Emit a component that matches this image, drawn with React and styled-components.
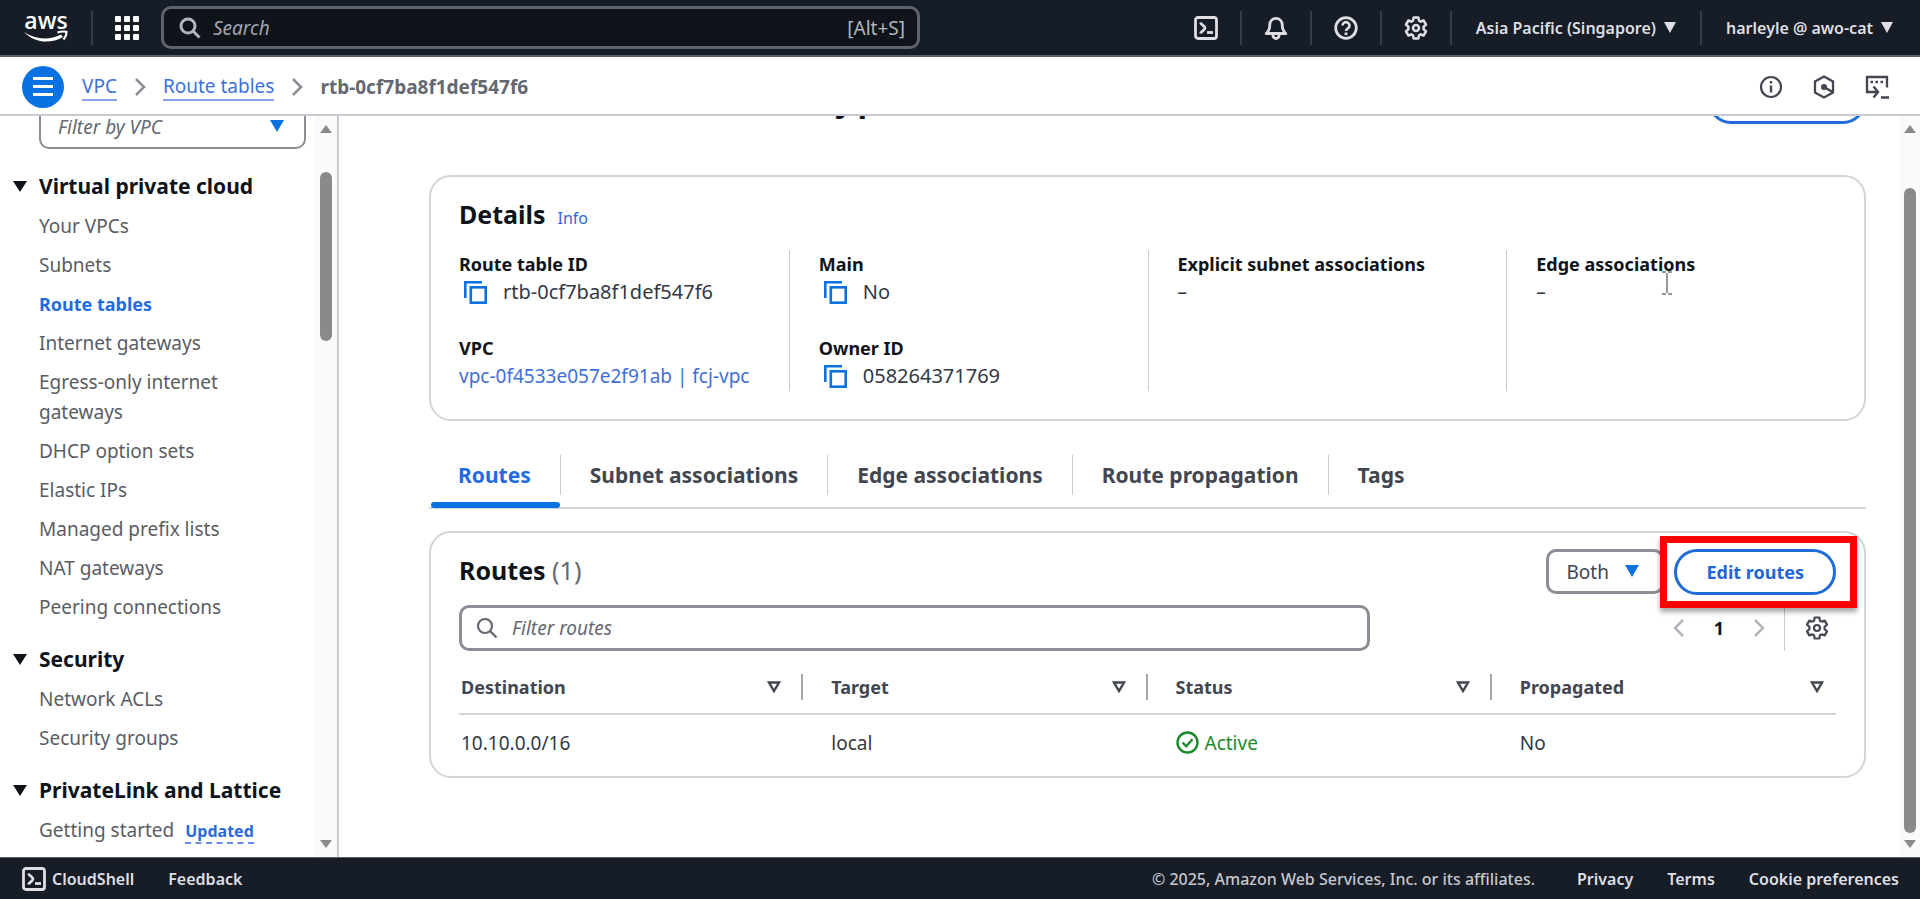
import React from 'react'
import styled, { createGlobalStyle } from 'styled-components'

const GlobalStyle = createGlobalStyle`
  * { box-sizing: border-box; }
  body {
    margin: 0;
    background: #fff;
    color: #0f141a;
    font-family: "Noto Sans", "Open Sans", sans-serif;
    font-size: 19px;
    line-height: 28px;
  }
  a { text-decoration: none; }
  button, input, select { font-family: inherit; font-size: inherit; }
`

const Page = styled.div`
  display: flex;
  flex-direction: column;
  height: 100vh;
`

/* ---- top bar ---- */
const TopBar = styled.header`
  display: flex;
  align-items: center;
  flex: none;
  height: 57px;
  padding: 0 3px 0 24px;
  background: #161d26;
  border-bottom: 2px solid #5b606b;
  color: #dedee3;
`
const LogoLink = styled.a`
  display: flex;
  margin-right: 22px;
`
const BarLine = styled.span`
  width: 2px;
  height: 34px;
  background: #363b45;
`
const BarButton = styled.button`
  display: flex;
  align-items: center;
  gap: 8px;
  padding: 0 ${props => props.$pad || 22}px;
  border: 0;
  background: none;
  color: #dedee3;
  font-size: 16px;
  font-weight: 600;
  white-space: nowrap;
`
const SearchBox = styled.label`
  display: flex;
  align-items: center;
  gap: 12px;
  width: 759px;
  height: 43px;
  margin-right: auto;
  padding: 0 12px 0 15px;
  border: 3px solid #5f636d;
  border-radius: 10px;
  background: #0f141a;
  color: #b4b4bb;
`
const SearchInput = styled.input`
  flex: 1;
  min-width: 0;
  padding: 0;
  border: 0;
  outline: 0;
  background: none;
  color: inherit;
  &::placeholder {
    color: #a4a4ad;
    font-style: italic;
    opacity: 1;
  }
`

/* ---- breadcrumbs ---- */
const CrumbBar = styled.div`
  display: flex;
  align-items: center;
  flex: none;
  height: 59px;
  padding: 2px 31px 0 22px;
  border-bottom: 2px solid #c9cad2;
`
const MenuButton = styled.button`
  display: flex;
  align-items: center;
  justify-content: center;
  width: 42px;
  height: 42px;
  margin-right: 18px;
  padding: 0;
  border: 0;
  border-radius: 50%;
  background: #0972e0;
`
const Crumbs = styled.nav`
  display: flex;
  align-items: center;
  gap: 17px;
  margin-right: auto;
`
const CrumbLink = styled.a`
  line-height: 26px;
  border-bottom: 2px solid #8ba0ec;
  color: #3f6fd8;
`
const CrumbCurrent = styled.span`
  color: #656871;
  font-weight: 700;
`
const ToolButtons = styled.div`
  display: flex;
  gap: 29px;
`
const IconButton = styled.button`
  display: flex;
  padding: 0;
  border: 0;
  background: none;
  color: #424650;
`

/* ---- body ---- */
const Body = styled.div`
  display: flex;
  flex: 1;
  min-height: 0;
`
const Sidebar = styled.aside`
  display: flex;
  flex: none;
  width: 339px;
  overflow: hidden;
  border-right: 2px solid #c9cad2;
`
const SideContent = styled.div`
  flex: 1;
  padding: 0 9px 0 13px;
`
const FilterSelect = styled.div`
  position: relative;
  margin: -12px 0 0 26px;
`
const Select = styled.select`
  appearance: none;
  display: block;
  width: 100%;
  height: 45px;
  padding: 0 40px 0 17px;
  border: ${props => props.$line || 2}px solid #8c8c94;
  border-radius: 10px;
  background: #fff;
  color: ${props => props.$hint ? '#656871' : '#424650'};
  font-style: ${props => props.$hint ? 'italic' : 'normal'};
`
const SelectCaret = styled.span`
  position: absolute;
  top: 16px;
  right: ${props => props.$right || 22}px;
  display: flex;
  color: #0972e0;
  pointer-events: none;
`
const SideSection = styled.section`
  margin-top: 22px;
`
const SideTitle = styled.h3`
  display: flex;
  align-items: center;
  gap: 12px;
  margin: 0 0 10px;
  font-size: 21px;
  font-weight: 700;
  line-height: 30px;
  white-space: nowrap;
`
const SideList = styled.ul`
  display: flex;
  flex-direction: column;
  gap: 9px;
  margin: 0;
  padding: 0 20px 0 26px;
  list-style: none;
  line-height: 30px;
`
const SideLink = styled.a`
  color: ${props => props.$active ? '#1f6ce0' : '#5a5c64'};
  font-size: ${props => props.$active ? 18 : 19}px;
  font-weight: ${props => props.$active ? 700 : 400};
`
const Updated = styled.a`
  display: inline-block;
  margin-left: 11px;
  border-bottom: 2px dashed #6b8fe8;
  color: #2a6ad8;
  font-size: 16px;
  font-weight: 700;
  line-height: 22px;
`
const Track = styled.div`
  display: flex;
  flex-direction: column;
  align-items: center;
  flex: none;
  width: ${props => props.$width}px;
  padding: 9px 0;
  background: #fafafa;
  color: #8a8a8a;
`
const Thumb = styled.div`
  width: 12px;
  height: ${props => props.$size};
  margin: ${props => props.$top}px 0 auto;
  border-radius: 6px;
  background: #8a8a8a;
`
const Main = styled.main`
  flex: 1;
  min-width: 0;
  overflow: hidden;
  padding: 0 34px 0 90px;
`
const TitleRow = styled.div`
  display: flex;
  align-items: flex-start;
  justify-content: space-between;
  margin-top: -38px;
  height: 46px;
`
const PageTitle = styled.h1`
  margin: 0;
  font-size: 32px;
  font-weight: 700;
  line-height: 42px;
`
const PillButton = styled.button`
  height: 46px;
  padding: 0 ${props => props.$pad || 29}px;
  border: 3px solid #1f6cd8;
  border-radius: 23px;
  background: #fff;
  color: #1f66d6;
  font-size: 18px;
  font-weight: 700;
`
const Card = styled.section`
  margin-top: ${props => props.$top}px;
  border: 2px solid #d3d4d9;
  border-radius: 22px;
`
const CardTitle = styled.h2`
  margin: 0;
  font-size: 25px;
  font-weight: 700;
  line-height: 42px;
`
const DetailsHead = styled.div`
  display: flex;
  align-items: baseline;
  gap: 12px;
  padding: 16px 28px 15px;
`
const InfoLink = styled.a`
  color: #2a6ad8;
  font-size: 16px;
`
const Columns = styled.div`
  display: grid;
  grid-template-columns: repeat(4, 1fr);
  margin: 0 -1px 28px;
`
const Column = styled.div`
  position: relative;
  display: flex;
  flex-direction: column;
  gap: 28px;
  height: 141px;
  padding: 0 29px;
  border-left: ${props => props.$first ? 0 : 1}px solid #c9cad2;
`
const Field = styled.dl`
  margin: 0;
`
const FieldName = styled.dt`
  font-size: 18px;
  font-weight: 700;
`
const FieldValue = styled.dd`
  display: flex;
  align-items: center;
  gap: 16px;
  margin: 0;
  padding-left: ${props => props.$icon ? 5 : 0}px;
  color: #333843;
  font-size: ${props => props.$icon ? 20 : 19}px;
  white-space: nowrap;
`
const ValueLink = styled.a`
  color: #3f6fd8;
`
const Pointer = styled.span`
  position: absolute;
  top: 21px;
  left: 155px;
  display: flex;
  color: #777;
`

/* ---- tabs ---- */
const Tabs = styled.div`
  display: flex;
  align-items: flex-start;
  height: 54px;
  margin-top: 34px;
  border-bottom: 2px solid #d3d4d9;
`
const Tab = styled.button`
  position: relative;
  height: 40px;
  padding: 0 29px;
  border: 0;
  border-right: ${props => props.$last ? 0 : 1}px solid #c9cad2;
  background: none;
  color: ${props => props.$active ? '#1f6ce0' : '#424650'};
  font-size: 21px;
  font-weight: 700;
  &::after {
    content: "";
    display: ${props => props.$active ? 'block' : 'none'};
    position: absolute;
    right: 0;
    bottom: -13px;
    left: 2px;
    height: 6px;
    border-radius: 3px;
    background: #0972e0;
  }
`

/* ---- routes ---- */
const RoutesHead = styled.div`
  display: flex;
  align-items: flex-start;
  gap: 10px;
  padding: 16px 28px 10px;
`
const Count = styled.span`
  color: #656871;
  font-weight: 400;
`
const BothSelect = styled.div`
  position: relative;
  width: 118px;
  margin-left: auto;
`
const Highlight = styled.div`
  position: relative;
  &::after {
    content: "";
    position: absolute;
    top: -13px;
    right: -21px;
    bottom: -13px;
    left: -14px;
    border: 7px solid #fe0000;
    box-shadow: 0 4px 5px rgba(0, 0, 0, 0.35);
    pointer-events: none;
  }
`
const FilterRow = styled.div`
  display: flex;
  align-items: center;
  padding: 0 28px;
`
const FilterBox = styled(SearchBox)`
  flex: 0 1 911px;
  width: auto;
  height: 46px;
  gap: 14px;
  padding-left: 14px;
  border-color: #8c8c94;
  background: #fff;
  color: #656871;
  input::placeholder { color: #656871; }
`
const Pager = styled.div`
  display: flex;
  align-items: center;
  gap: 29px;
  height: 45px;
  padding-right: 19px;
  border-right: 1px solid #c9cad2;
  font-size: 18px;
  font-weight: 700;
`
const SettingsButton = styled(IconButton)`
  margin: 0 7px 0 20px;
`
const Table = styled.table`
  width: calc(100% - 56px);
  margin: 9px 28px 0;
  border-collapse: collapse;
  table-layout: fixed;
  text-align: left;
`
const Th = styled.th`
  height: 54px;
  padding: 0;
  border-bottom: 2px solid #d3d4d9;
  color: #424650;
  font-size: 18px;
  font-weight: 700;
`
const ThInner = styled.div`
  display: flex;
  align-items: center;
  justify-content: space-between;
  height: 26px;
  padding: 0 ${props => props.$last ? 12 : 20}px 0 ${props => props.$first ? 2 : 28}px;
  border-right: ${props => props.$last ? 0 : 2}px solid #a4a5ac;
`
const Td = styled.td`
  height: 62px;
  padding: 0 0 6px ${props => props.$first ? 2 : 28}px;
  color: #333843;
`
const Status = styled.span`
  display: flex;
  align-items: center;
  gap: 6px;
  color: #1e8a2e;
`

/* ---- footer ---- */
const Footer = styled.footer`
  display: flex;
  align-items: center;
  flex: none;
  height: 42px;
  padding: 0 21px 0 22px;
  border-top: 1px solid #5b606b;
  background: #161d26;
  color: #c6c6cd;
  font-size: 16px;
  font-weight: 600;
`
const ShellButton = styled.button`
  display: flex;
  align-items: center;
  gap: 6px;
  padding: 0;
  border: 0;
  background: none;
  color: #dedee3;
  font-weight: 600;
`
const FooterLink = styled.a`
  margin-left: 34px;
  color: #dedee3;
`
const Copyright = styled.span`
  margin: 0 8px 0 auto;
  font-weight: 500;
`

const stroke = { fill: 'none', stroke: 'currentColor', strokeWidth: 2 }

const Caret = ({ w = 13, h = 11 }) => (
  <svg width={w} height={h} viewBox="0 0 12 10" preserveAspectRatio="none"><path d="M0 0h12L6 10z" fill="currentColor" /></svg>
)
const ArrowUp = () => (
  <svg width="12" height="8" viewBox="0 0 12 8"><path d="M0 8h12L6 0z" fill="currentColor" /></svg>
)
const ArrowDown = () => (
  <svg width="12" height="8" viewBox="0 0 12 8"><path d="M0 0h12L6 8z" fill="currentColor" /></svg>
)
const SortIcon = () => (
  <svg width="14" height="12" viewBox="0 0 14 12"><path d="M2 1.5h10L7 10z" {...stroke} strokeWidth="2.4" /></svg>
)
const Chevron = ({ left, color = '#8c8c94' }) => (
  <svg width="12" height="18" viewBox="0 0 12 18"><path d={left ? 'M10 1L2 9l8 8' : 'M2 1l8 8-8 8'} fill="none" stroke={color} strokeWidth="2.5" /></svg>
)
const SearchIcon = ({ bold }) => (
  <svg width="22" height="22" viewBox="0 0 22 22">
    <circle cx="9" cy="9" r="7" {...stroke} strokeWidth={bold ? 3 : 2.2} />
    <path d="M14 14l6.5 6.5" {...stroke} strokeWidth={bold ? 3 : 2.4} />
  </svg>
)
const ShellIcon = () => (
  <svg width="24" height="24" viewBox="0 0 24 24">
    <rect x="1.5" y="1.5" width="21" height="21" rx="2.5" {...stroke} strokeWidth="2.8" />
    <path d="M6.500 6.500c.5 2.500 4.500 3.500 4.500 5.500s-4 3-4.500 5.500" {...stroke} strokeWidth="2.8" strokeLinejoin="round" />
    <path d="M13 16.500h6" {...stroke} strokeWidth="2.8" />
  </svg>
)
const BellIcon = () => (
  <svg width="24" height="24" viewBox="0 0 24 24">
    <path d="M2.200 17.500c3-2.500 3.600-4.500 3.600-9a6.200 6.200 0 0 1 12.400 0c0 4.500.6 6.500 3.600 9z" {...stroke} strokeWidth="2.8" strokeLinejoin="round" />
    <path d="M9 18.500v1a3 3 0 0 0 6 0v-1" {...stroke} strokeWidth="2.8" />
  </svg>
)
const HelpIcon = () => (
  <svg width="24" height="24" viewBox="0 0 24 24">
    <circle cx="12" cy="12" r="10.300" {...stroke} strokeWidth="2.8" />
    <path d="M8.500 9.500a3.500 3.300 0 1 1 5.500 2.700c-1.300 1-2 1.300-2 2.800" {...stroke} strokeWidth="2.6" />
    <path d="M10.600 16.500h2.800v2.600h-2.800z" fill="currentColor" />
  </svg>
)
const GearIcon = ({ weight = 2.6 }) => (
  <svg width="24" height="24" viewBox="0 0 24 24">
    <path d="M9.700 1.500h4.600l.7 3.200 1.600.9 3.100-1 2.300 4-2.400 2.200v2.400l2.400 2.200-2.300 4-3.100-1-1.600.9-.7 3.200H9.700L9 19.300l-1.600-.9-3.100 1-2.300-4 2.400-2.200v-2.400L2 8.600l2.300-4 3.100 1L9 4.700z" {...stroke} strokeWidth={weight} strokeLinejoin="round" />
    <circle cx="12" cy="12" r="3" {...stroke} strokeWidth={weight} />
  </svg>
)
const CopyIcon = () => (
  <svg width="23" height="23" viewBox="0 0 23 23" color="#0972e0">
    <path d="M1.300 17V1.300H18" {...stroke} strokeWidth="2.6" />
    <rect x="6.800" y="6.300" width="14.900" height="15.400" {...stroke} strokeWidth="2.6" />
  </svg>
)
const AwsLogo = () => (
  <svg width="45" height="48" viewBox="0 0 45 48">
    <text x="22" y="25" textAnchor="middle" fontFamily="Open Sans" fontSize="23" fontWeight="600" fill="#fff">aws</text>
    <path d="M0 28c11 7.500 25 8.500 37 2.500l2 2.500C27 40 11 39.500 0 28z" fill="#fff" />
    <path d="M33.500 28.500c3-1.300 6-1.300 9-.7.2 2.700-.8 5.200-3 7.700" fill="none" stroke="#fff" strokeWidth="2" />
  </svg>
)

const sections = [
  {
    title: 'Virtual private cloud',
    items: ['Your VPCs', 'Subnets', 'Route tables', 'Internet gateways', 'Egress-only internet gateways',
      'DHCP option sets', 'Elastic IPs', 'Managed prefix lists', 'NAT gateways', 'Peering connections']
  },
  { title: 'Security', items: ['Network ACLs', 'Security groups'] },
  { title: 'PrivateLink and Lattice', items: ['Getting started'] }
]
const tabs = ['Routes', 'Subnet associations', 'Edge associations', 'Route propagation', 'Tags']
const headers = ['Destination', 'Target', 'Status', 'Propagated']

function TopNav() {
  return (
    <TopBar>
      <LogoLink href="#" aria-label="AWS home"><AwsLogo /></LogoLink>
      <BarLine />
      <BarButton aria-label="Services">
        <svg width="24" height="24" viewBox="0 0 24 24" fill="#fff">
          {[0, 9, 18].map(y => [0, 9, 18].map(x => <rect key={x + '-' + y} x={x} y={y} width="6" height="6" rx="1" />))}
        </svg>
      </BarButton>
      <SearchBox>
        <SearchIcon bold />
        <SearchInput type="text" placeholder="Search" aria-label="Search" />
        <span>[Alt+S]</span>
      </SearchBox>
      <BarButton aria-label="CloudShell"><ShellIcon /></BarButton>
      <BarLine />
      <BarButton aria-label="Notifications"><BellIcon /></BarButton>
      <BarLine />
      <BarButton aria-label="Help"><HelpIcon /></BarButton>
      <BarLine />
      <BarButton aria-label="Settings"><GearIcon /></BarButton>
      <BarLine />
      <BarButton $pad={24}>Asia Pacific (Singapore) <Caret w={12} /></BarButton>
      <BarLine />
      <BarButton $pad={24}>harleyle @ awo-cat <Caret w={12} /></BarButton>
    </TopBar>
  )
}

function Breadcrumbs() {
  return (
    <CrumbBar>
      <MenuButton aria-label="Menu">
        <svg width="20" height="19" viewBox="0 0 20 19"><path d="M0 1.500h20M0 9.500h20M0 17.500h20" stroke="#fff" strokeWidth="3" /></svg>
      </MenuButton>
      <Crumbs>
        <CrumbLink href="#">VPC</CrumbLink>
        <Chevron />
        <CrumbLink href="#">Route tables</CrumbLink>
        <Chevron />
        <CrumbCurrent>rtb-0cf7ba8f1def547f6</CrumbCurrent>
      </Crumbs>
      <ToolButtons>
        <IconButton aria-label="Info">
          <svg width="24" height="24" viewBox="0 0 24 24">
            <circle cx="12" cy="12" r="10" {...stroke} strokeWidth="2.200" />
            <path d="M12 10.500v7M12 6v2.500" {...stroke} strokeWidth="2.400" />
          </svg>
        </IconButton>
        <IconButton aria-label="Diagnostics">
          <svg width="24" height="24" viewBox="0 0 24 24">
            <path d="M12 1.500l9 5v11l-9 5-9-5v-11z" {...stroke} strokeWidth="2.300" />
            <circle cx="12" cy="12" r="3" fill="currentColor" />
            <path d="M12 12l8.500 5" {...stroke} strokeWidth="2.600" />
          </svg>
        </IconButton>
        <IconButton aria-label="Console">
          <svg width="24" height="24" viewBox="0 0 24 24">
            <path d="M4 17H2V2h20v10.500" {...stroke} strokeWidth="2.300" />
            <path d="M5.500 7h2.500M10.500 7h2.500M15.500 7h2.500" {...stroke} strokeWidth="2.400" />
            <path d="M2 17h10M8.500 11.500l4.500 5.500-4.500 5.500M16 22.500h8" {...stroke} strokeWidth="2.400" />
          </svg>
        </IconButton>
      </ToolButtons>
    </CrumbBar>
  )
}

function SideNav() {
  return (
    <Sidebar>
      <SideContent>
        <FilterSelect>
          <Select $hint aria-label="Filter by VPC"><option>Filter by VPC</option></Select>
          <SelectCaret><Caret w={14} h={12} /></SelectCaret>
        </FilterSelect>
        {sections.map(section => (
          <SideSection key={section.title}>
            <SideTitle><Caret w={14} />{section.title}</SideTitle>
            <SideList>
              {section.items.map(item => (
                <li key={item}>
                  <SideLink href="#" $active={item === 'Route tables'}>{item}</SideLink>
                  {item === 'Getting started' && <Updated href="#">Updated</Updated>}
                </li>
              ))}
            </SideList>
          </SideSection>
        ))}
      </SideContent>
      <Track $width={22}>
        <ArrowUp />
        <Thumb $top={39} $size="169px" />
        <ArrowDown />
      </Track>
    </Sidebar>
  )
}

function Details() {
  return (
    <Card $top={51}>
      <DetailsHead>
        <CardTitle>Details</CardTitle>
        <InfoLink href="#">Info</InfoLink>
      </DetailsHead>
      <Columns>
        <Column $first>
          <Field>
            <FieldName>Route table ID</FieldName>
            <FieldValue $icon><CopyIcon />rtb-0cf7ba8f1def547f6</FieldValue>
          </Field>
          <Field>
            <FieldName>VPC</FieldName>
            <FieldValue><ValueLink href="#">vpc-0f4533e057e2f91ab | fcj-vpc</ValueLink></FieldValue>
          </Field>
        </Column>
        <Column>
          <Field>
            <FieldName>Main</FieldName>
            <FieldValue $icon><CopyIcon />No</FieldValue>
          </Field>
          <Field>
            <FieldName>Owner ID</FieldName>
            <FieldValue $icon><CopyIcon />058264371769</FieldValue>
          </Field>
        </Column>
        <Column>
          <Field>
            <FieldName>Explicit subnet associations</FieldName>
            <FieldValue>–</FieldValue>
          </Field>
        </Column>
        <Column>
          <Field>
            <FieldName>Edge associations</FieldName>
            <FieldValue>–</FieldValue>
          </Field>
          <Pointer>
            <svg width="10" height="24" viewBox="0 0 10 24"><path d="M0 1h4M6 1h4M5 2v20M0 23h4M6 23h4" {...stroke} strokeWidth="1.500" /></svg>
          </Pointer>
        </Column>
      </Columns>
    </Card>
  )
}

function RoutesCard() {
  return (
    <Card $top={22}>
      <RoutesHead>
        <CardTitle>Routes <Count>(1)</Count></CardTitle>
        <BothSelect>
          <Select $line={3} aria-label="Route type"><option>Both</option></Select>
          <SelectCaret $right={25}><Caret w={14} h={12} /></SelectCaret>
        </BothSelect>
        <Highlight><PillButton>Edit routes</PillButton></Highlight>
      </RoutesHead>
      <FilterRow>
        <FilterBox>
          <SearchIcon />
          <SearchInput type="text" placeholder="Filter routes" aria-label="Filter routes" />
        </FilterBox>
        <Pager>
          <IconButton aria-label="Previous page"><Chevron left color="#b4b4bb" /></IconButton>
          <span>1</span>
          <IconButton aria-label="Next page"><Chevron color="#b4b4bb" /></IconButton>
        </Pager>
        <SettingsButton aria-label="Preferences"><GearIcon weight={2.2} /></SettingsButton>
      </FilterRow>
      <Table>
        <thead>
          <tr>
            {headers.map((header, i) => (
              <Th key={header}>
                <ThInner $first={i === 0} $last={i === 3}>{header}<SortIcon /></ThInner>
              </Th>
            ))}
          </tr>
        </thead>
        <tbody>
          <tr>
            <Td $first>10.10.0.0/16</Td>
            <Td>local</Td>
            <Td>
              <Status>
                <svg width="23" height="23" viewBox="0 0 23 23">
                  <circle cx="11.500" cy="11.500" r="10" {...stroke} strokeWidth="2.400" />
                  <path d="M6.500 11.500l3.700 3.700 6.300-7" {...stroke} strokeWidth="2.400" />
                </svg>
                Active
              </Status>
            </Td>
            <Td>No</Td>
          </tr>
        </tbody>
      </Table>
    </Card>
  )
}

function App() {
  return (
    <Page>
      <GlobalStyle />
      <TopNav />
      <Breadcrumbs />
      <Body>
        <SideNav />
        <Main>
          <TitleRow>
            <PageTitle>rtb-0cf7ba8f1def547f6 / fcj-public</PageTitle>
            <PillButton $pad={33}>Actions <Caret w={14} h={12} /></PillButton>
          </TitleRow>
          <Details />
          <Tabs>
            {tabs.map((tab, i) => (
              <Tab key={tab} $active={i === 0} $last={i === tabs.length - 1}>{tab}</Tab>
            ))}
          </Tabs>
          <RoutesCard />
        </Main>
        <Track $width={20}>
          <ArrowUp />
          <Thumb $top={55} $size="645px" />
          <ArrowDown />
        </Track>
      </Body>
      <Footer>
        <ShellButton><ShellIcon />CloudShell</ShellButton>
        <FooterLink href="#">Feedback</FooterLink>
        <Copyright>© 2025, Amazon Web Services, Inc. or its affiliates.</Copyright>
        <FooterLink href="#">Privacy</FooterLink>
        <FooterLink href="#">Terms</FooterLink>
        <FooterLink href="#">Cookie preferences</FooterLink>
      </Footer>
    </Page>
  )
}

export default App
